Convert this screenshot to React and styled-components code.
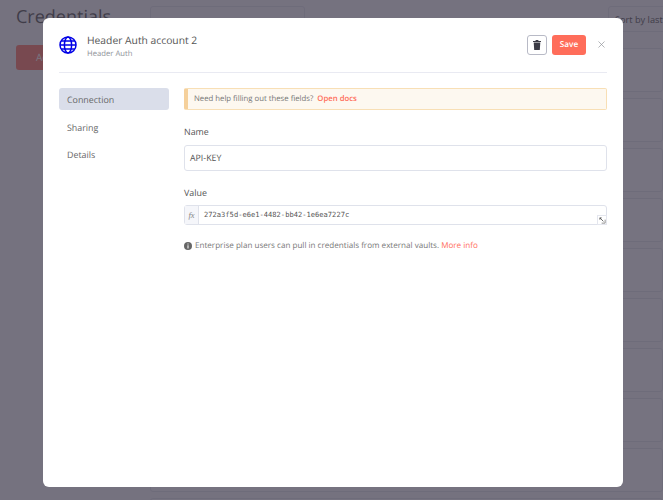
import React from 'react'
import styled, { createGlobalStyle } from 'styled-components'
import { X } from 'lucide-react'

const Global = createGlobalStyle`
  html, body { margin: 0; padding: 0; height: 100%; overflow: hidden; }
  body {
    font-family: "Open Sans", sans-serif;
    background: #f5f5f8;
    color: #555;
    text-rendering: geometricPrecision;
  }
  * { box-sizing: border-box; }
`

const Page = styled.div`
  width: 663px;
  height: 500px;
  overflow: hidden;
  display: grid;
  grid-template-columns: 150px 1fr;
`
const Side = styled.div`
  padding: 5px 0 0 16px;
`
const Title = styled.div`
  font-size: 18px;
  line-height: 25px;
  color: #444;
`
const AddButton = styled.div`
  margin-top: 15px;
  width: 100px;
  height: 25px;
  border-radius: 3px;
  background: #ff6d5a;
  color: #fff;
  font-size: 10px;
  line-height: 25px;
  padding-left: 20px;
`
const Content = styled.div`
  padding-top: 6px;
  display: flex;
  flex-direction: column;
`
const Toolbar = styled.div`
  display: flex;
  justify-content: space-between;
  height: 26px;
  margin-bottom: 16px;
`
const Search = styled.div`
  width: 155px;
  border: 1px solid #dcdfe8;
  border-radius: 3px;
`
const Sort = styled.div`
  width: 120px;
  margin-right: -65px;
  border: 1px solid #dcdfe8;
  border-radius: 3px;
  font-size: 9.2px;
  line-height: 26px;
  padding-left: 6px;
  color: #444;
  white-space: nowrap;
`
const Cards = styled.div`
  display: flex;
  flex-direction: column;
  gap: 6px;
`
const Card = styled.div`
  height: 44px;
  background: #f8f8fb;
  border: 1px solid #dcdfe8;
  border-radius: 3px;
  flex: none;
`
const Overlay = styled.div`
  position: fixed;
  inset: 0;
  background: rgba(62, 58, 75, 0.7);
  padding: 18px 40px 13px 43px;
`
const Modal = styled.div`
  width: 580px;
  height: 469px;
  background: #fff;
  border-radius: 6px;
  padding: 0 16px;
  position: relative;
`
const Header = styled.div`
  height: 55px;
  display: flex;
  align-items: center;
  border-bottom: 1px solid #e9eaf2;
`
const Globe = styled.svg`
  width: 18px;
  height: 18px;
  margin-right: 10px;
  flex: none;
`
const Names = styled.div`
  flex: 1;
  margin-top: 3px;
`
const CredName = styled.div`
  font-size: 10.3px;
  line-height: 15px;
  color: #555;
`
const CredType = styled.div`
  font-size: 7.7px;
  line-height: 11px;
  color: #909399;
`
const Actions = styled.div`
  display: flex;
  align-items: center;
  margin-top: -1px;
`
const TrashButton = styled.div`
  width: 20px;
  height: 20px;
  border: 1px solid #b8bac6;
  border-radius: 3px;
  display: flex;
  align-items: center;
  justify-content: center;
  margin-right: 5px;
`
const SaveButton = styled.div`
  width: 34px;
  height: 20px;
  background: #ff6d5a;
  border-radius: 3px;
  color: #fff;
  font-size: 8.2px;
  font-weight: 600;
  line-height: 20px;
  text-align: center;
  margin-right: 10px;
`
const CloseIcon = styled(X)`
  width: 11px;
  height: 11px;
  color: #909399;
  margin-top: -1px;
`
const Body = styled.div`
  display: flex;
  padding-top: 15px;
`
const Nav = styled.div`
  width: 110px;
  margin-right: 15px;
  display: flex;
  flex-direction: column;
  gap: 5.5px;
  flex: none;
`
const NavItem = styled.div`
  height: 22px;
  border-radius: 3px;
  padding-left: 8px;
  font-size: 8.9px;
  line-height: 23px;
  color: #666;
  background: ${p => (p.$active ? '#dadeea' : 'transparent')};
`
const Main = styled.div`
  flex: 1;
  min-width: 0;
`
const Notice = styled.div`
  height: 22px;
  background: #fdf8f0;
  border: 1px solid #f8dfb5;
  border-left: 4px solid #f5d09b;
  border-radius: 2px;
  padding-left: 6px;
  font-size: 7.75px;
  line-height: 20px;
  color: #777;
`
const Link = styled.span`
  color: #ff6d5a;
  font-weight: ${p => (p.$bold ? 600 : 400)};
  margin-left: ${p => (p.$bold ? 2 : 0)}px;
`
const Label = styled.div`
  font-size: 8.9px;
  line-height: 14px;
  color: #555;
  margin-top: ${p => p.$top}px;
  margin-bottom: ${p => p.$bottom}px;
`
const TextInput = styled.div`
  height: 26px;
  border: 1px solid #dfe2eb;
  border-radius: 3px;
  padding-left: 5px;
  font-size: 8.8px;
  line-height: 24px;
  color: #555;
`
const ExpressionInput = styled.div`
  height: 20px;
  display: flex;
  border: 1px solid #dfe2eb;
  border-radius: 3px;
  position: relative;
`
const FxTag = styled.div`
  width: 14px;
  background: #f5f6fa;
  border-right: 1px solid #dfe2eb;
  font-family: "Liberation Serif", serif;
  font-style: italic;
  font-size: 8.5px;
  line-height: 18px;
  text-align: center;
  color: #888;
  flex: none;
`
const Expression = styled.div`
  padding-left: 5px;
  font-family: "DejaVu Sans Mono", monospace;
  font-size: 7.1px;
  line-height: 18px;
  color: #555;
`
const ExpandCorner = styled.div`
  position: absolute;
  right: -1px;
  bottom: -1px;
  width: 10px;
  height: 10px;
  background: #fff;
  border: 1px solid #e4e6ee;
  display: flex;
  align-items: center;
  justify-content: center;
`
const Hint = styled.div`
  margin-top: 15px;
  display: flex;
  align-items: center;
  font-size: 8.08px;
  line-height: 12px;
  color: #777;
  white-space: nowrap;
`
const InfoIcon = styled.svg`
  width: 8px;
  height: 8px;
  margin-right: 3px;
  flex: none;
`

const rows = Array.from({ length: 10 })

export default function App() {
  return <>
    <Global/>
    <Page>
      <Side>
        <Title>Credentials</Title>
        <AddButton>Add</AddButton>
      </Side>
      <Content>
        <Toolbar>
          <Search/>
          <Sort>Sort by last</Sort>
        </Toolbar>
        <Cards>
          {rows.map((_, i) => <Card key={i}/>)}
        </Cards>
      </Content>
    </Page>

    <Overlay>
      <Modal>
        <Header>
          <Globe viewBox="0 0 18 18" fill="none" stroke="#0000e6" strokeWidth="1.5">
            <circle cx="9" cy="9" r="8"/>
            <ellipse cx="9" cy="9" rx="3.6" ry="8"/>
            <path d="M1 9h16M2.2 5h13.6M2.2 13h13.6"/>
          </Globe>
          <Names>
            <CredName>Header Auth account 2</CredName>
            <CredType>Header Auth</CredType>
          </Names>
          <Actions>
            <TrashButton>
              <svg width="8" height="10" viewBox="0 0 8 10" fill="#3c3c46">
                <path d="M0 1h2.4l.4-1h2.4l.4 1H8v1H0zM.7 2.6h6.6L6.8 10H1.2z"/>
              </svg>
            </TrashButton>
            <SaveButton>Save</SaveButton>
            <CloseIcon strokeWidth={1.5}/>
          </Actions>
        </Header>
        <Body>
          <Nav>
            <NavItem $active>Connection</NavItem>
            <NavItem>Sharing</NavItem>
            <NavItem>Details</NavItem>
          </Nav>
          <Main>
            <Notice>Need help filling out these fields? <Link $bold>Open docs</Link></Notice>
            <Label $top={15} $bottom={6}>Name</Label>
            <TextInput>API-KEY</TextInput>
            <Label $top={15} $bottom={5}>Value</Label>
            <ExpressionInput>
              <FxTag>fx</FxTag>
              <Expression>272a3f5d-e6e1-4482-bb42-1e6ea7227c</Expression>
              <ExpandCorner>
                <svg width="7" height="7" viewBox="0 0 8 8" fill="none" stroke="#555" strokeWidth="1">
                  <path d="M1 1l4 4M1 1h2M1 1v2"/>
                  <path d="M3 7h4V3" stroke="#888"/>
                </svg>
              </ExpandCorner>
            </ExpressionInput>
            <Hint>
              <InfoIcon viewBox="0 0 8 8">
                <circle cx="4" cy="4" r="4" fill="#666"/>
                <path d="M3.5 1.5h1v1h-1zM3.5 3.3h1v3.2h-1z" fill="#fff"/>
              </InfoIcon>
              Enterprise plan users can pull in credentials from external vaults.&nbsp;<Link>More info</Link>
            </Hint>
          </Main>
        </Body>
      </Modal>
    </Overlay>
  </>
}
